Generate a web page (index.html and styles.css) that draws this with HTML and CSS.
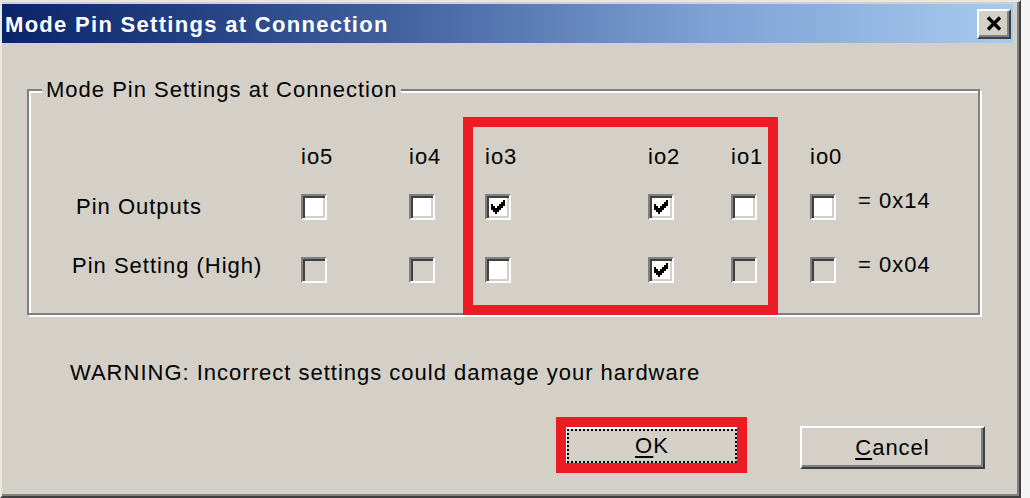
FILE: index.html
```html
<!DOCTYPE html>
<html lang="en">
<head>
    <meta charset="UTF-8">
    <meta name="viewport" content="width=device-width, initial-scale=1.0">
    <title>Mode Pin Settings at Connection</title>
    <link rel="stylesheet" href="styles.css">
</head>
<body>
    <div class="window">
        <div class="titlebar">
            <span class="title">Mode Pin Settings at Connection</span>
            <div class="close-btn">
                <svg width="16" height="15" viewBox="0 0 16 15">
                    <path d="M2 1.5 L14 13.5 M14 1.5 L2 13.5" stroke="#000" stroke-width="3.5" fill="none"/>
                </svg>
            </div>
        </div>

        <div class="content">
            <fieldset class="group">
                <legend>Mode Pin Settings at Connection</legend>

                <div class="pins">
                    <!-- header row -->
                    <div></div>
                    <div class="col-label">io5</div>
                    <div class="col-label">io4</div>
                    <div class="col-label">io3</div>
                    <div class="col-label">io2</div>
                    <div class="col-label">io1</div>
                    <div class="col-label">io0</div>
                    <div></div>

                    <!-- outputs -->
                    <div class="row-label first">Pin Outputs</div>
                    <div class="check"></div>
                    <div class="check"></div>
                    <div class="check checked"><svg width="14" height="14" viewBox="0 0 7 7"><polygon points="6,0 7,0 7,3 6,3 6,4 5,4 5,5 4,5 4,6 3,6 3,7 2,7 2,6 1,6 1,5 0,5 0,2 1,2 1,3 2,3 2,4 3,4 3,3 4,3 4,2 5,2 5,1 6,1"/></svg></div>
                    <div class="check checked"><svg width="14" height="14" viewBox="0 0 7 7"><polygon points="6,0 7,0 7,3 6,3 6,4 5,4 5,5 4,5 4,6 3,6 3,7 2,7 2,6 1,6 1,5 0,5 0,2 1,2 1,3 2,3 2,4 3,4 3,3 4,3 4,2 5,2 5,1 6,1"/></svg></div>
                    <div class="check"></div>
                    <div class="check"></div>
                    <div class="value first">= 0x14</div>

                    <!-- high setting -->
                    <div class="row-label second">Pin Setting (High)</div>
                    <div class="check disabled"></div>
                    <div class="check disabled"></div>
                    <div class="check"></div>
                    <div class="check checked"><svg width="14" height="14" viewBox="0 0 7 7"><polygon points="6,0 7,0 7,3 6,3 6,4 5,4 5,5 4,5 4,6 3,6 3,7 2,7 2,6 1,6 1,5 0,5 0,2 1,2 1,3 2,3 2,4 3,4 3,3 4,3 4,2 5,2 5,1 6,1"/></svg></div>
                    <div class="check disabled"></div>
                    <div class="check disabled"></div>
                    <div class="value second">= 0x04</div>

                    <!-- highlight around io3..io1 -->
                    <div class="highlight"></div>
                </div>
            </fieldset>

            <p class="warning">WARNING: Incorrect settings could damage your hardware</p>

            <div class="buttons">
                <div class="ok-mark">
                    <div class="btn btn-ok">
                        <span class="focus"><u>O</u>K</span>
                    </div>
                </div>
                <div class="btn btn-cancel"><u>C</u>ancel</div>
            </div>
        </div>
    </div>
</body>
</html>
```

FILE: styles.css
```css
:root {
    --face: #d4d0c8;
    --shadow: #808080;
    --dark: #404040;
    --light: #ffffff;
    --mark: #ed1c24;
}

* {
    margin: 0;
    padding: 0;
    box-sizing: border-box;
}

body {
    background-color: #f4f4f4;
    font-family: 'Liberation Sans', Arial, sans-serif;
    font-size: 22px;
    letter-spacing: 1px;
    color: #000;
    overflow: hidden;
}

.window {
    width: 1021px;
    height: 498px;
    background-color: var(--face);
    border-left: 2px solid #e8e6e0;
    border-top: 2px solid #e8e6e0;
    border-right: 2px solid var(--dark);
    border-bottom: 2px solid var(--dark);
    box-shadow: inset -2px -2px 0 var(--shadow);
    padding: 2px 6px 0 0;
    overflow: hidden;
}

.titlebar {
    height: 39px;
    display: flex;
    align-items: center;
    justify-content: space-between;
    padding: 0 2px 0 3px;
    background: linear-gradient(to right, #0a246a 0%, #3a5a98 35%, #7ea2d4 70%, #a6caf0 100%);
}

.title {
    color: #fff;
    font-weight: 700;
    letter-spacing: 1.3px;
    padding-top: 3px;
}

.close-btn {
    width: 34px;
    height: 30px;
    display: flex;
    align-items: center;
    justify-content: center;
    background-color: var(--face);
    border-top: 2px solid var(--light);
    border-left: 2px solid var(--light);
    border-right: 2px solid var(--dark);
    border-bottom: 2px solid var(--dark);
    box-shadow: inset -2px -2px 0 var(--shadow);
}

.content {
    padding-left: 25px;
}

.group {
    width: 953px;
    margin: 35px 0 0 0;
    padding: 35px 0 10px 0;
    border: 2px solid var(--shadow);
    box-shadow: inset 2px 2px 0 var(--light), 2px 2px 0 var(--light);
    min-inline-size: 0;
}

.group legend {
    margin-left: 13px;
    padding: 0 4px;
    line-height: 24px;
    background-color: var(--face);
}

.pins {
    position: relative;
    margin-left: 43px;
    display: grid;
    grid-template-columns: 228px 108px 76px 163px 83px 79px 48px auto;
    grid-template-rows: 40px 60px 66px;
    align-items: center;
    line-height: 24px;
}

.col-label {
    padding-left: 1px;
}

.row-label.first {
    padding-left: 4px;
}

.row-label.second {
    padding-bottom: 8px;
}

.value {
    padding-left: 1px;
}

.value.first {
    padding-bottom: 12px;
}

.value.second {
    padding-bottom: 10px;
}

.check {
    width: 26px;
    height: 26px;
    display: flex;
    align-items: center;
    justify-content: center;
    background-color: #fff;
    border-top: 2px solid var(--shadow);
    border-left: 2px solid var(--shadow);
    border-right: 2px solid var(--light);
    border-bottom: 2px solid var(--light);
    box-shadow: inset 2px 2px 0 var(--dark), inset -2px -2px 0 var(--face);
    margin-left: 1px;
}

.check.disabled {
    background-color: var(--face);
}

.highlight {
    position: absolute;
    left: 391px;
    top: -20px;
    width: 315px;
    height: 198px;
    border: 10px solid var(--mark);
}

.warning {
    margin: 46px 0 0 43px;
    line-height: 24px;
}

.buttons {
    display: flex;
    align-items: flex-start;
    gap: 53px;
    margin-top: 32px;
    padding-left: 529px;
}

.ok-mark {
    padding: 10px;
    background-color: var(--mark);
}

.btn {
    display: flex;
    align-items: center;
    justify-content: center;
    background-color: var(--face);
    line-height: 24px;
}

.btn-ok {
    width: 171px;
    height: 36px;
    border-top: 2px solid var(--light);
    border-left: 1px solid var(--light);
}

.btn-ok .focus {
    width: 100%;
    height: 100%;
    display: flex;
    align-items: center;
    justify-content: center;
    border: 2px dotted #000;
}

.btn-cancel {
    width: 185px;
    height: 43px;
    margin-top: 9px;
    border-top: 2px solid var(--light);
    border-left: 2px solid var(--light);
    border-right: 2px solid var(--dark);
    border-bottom: 2px solid var(--dark);
    box-shadow: inset -2px -2px 0 var(--shadow);
}

u {
    text-decoration-thickness: 2px;
    text-underline-offset: 3px;
}
```
